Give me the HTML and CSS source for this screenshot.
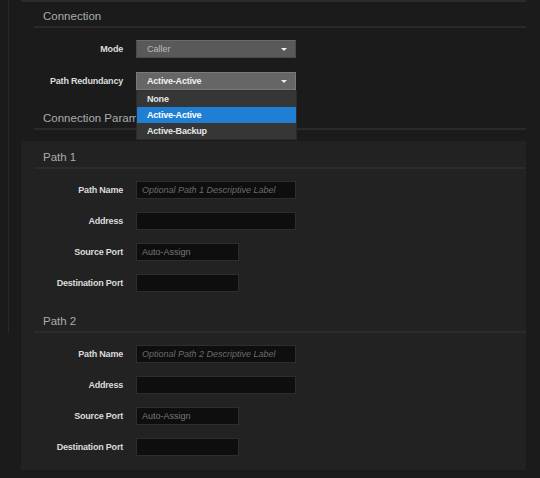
FILE: index.html
```html
<!DOCTYPE html>
<html lang="en">
<head>
  <meta charset="UTF-8" />
  <meta name="viewport" content="width=device-width, initial-scale=1.0" />
  <title>Connection Settings</title>
  <link rel="stylesheet" href="styles.css">
</head>
<body>
  <div class="layout">
    <div class="rail"></div>

    <div class="main">
      <!-- Connection -->
      <div class="section">
        <h2 class="section-title first">Connection</h2>
        <div class="fields">
          <div class="field">
            <label>Mode</label>
            <div class="select">
              <span>Caller</span>
              <i class="caret"></i>
            </div>
          </div>
          <div class="field">
            <label>Path Redundancy</label>
            <div class="select-wrap">
              <div class="select open">
                <span>Active-Active</span>
                <i class="caret"></i>
              </div>
              <ul class="menu">
                <li>None</li>
                <li class="selected">Active-Active</li>
                <li>Active-Backup</li>
              </ul>
            </div>
          </div>
        </div>
      </div>

      <div class="section params">
        <h2 class="section-title">Connection Parameters</h2>
      </div>

      <!-- Paths -->
      <div class="panel">
        <div class="section">
          <h2 class="section-title">Path 1</h2>
          <div class="fields tight">
            <div class="field">
              <label>Path Name</label>
              <input type="text" class="input wide desc" placeholder="Optional Path 1 Descriptive Label" />
            </div>
            <div class="field">
              <label>Address</label>
              <input type="text" class="input wide" />
            </div>
            <div class="field">
              <label>Source Port</label>
              <input type="text" class="input short" placeholder="Auto-Assign" />
            </div>
            <div class="field">
              <label>Destination Port</label>
              <input type="text" class="input short" />
            </div>
          </div>
        </div>

        <div class="section">
          <h2 class="section-title">Path 2</h2>
          <div class="fields tight last">
            <div class="field">
              <label>Path Name</label>
              <input type="text" class="input wide desc" placeholder="Optional Path 2 Descriptive Label" />
            </div>
            <div class="field">
              <label>Address</label>
              <input type="text" class="input wide" />
            </div>
            <div class="field">
              <label>Source Port</label>
              <input type="text" class="input short" placeholder="Auto-Assign" />
            </div>
            <div class="field">
              <label>Destination Port</label>
              <input type="text" class="input short" />
            </div>
          </div>
        </div>
      </div>
    </div>
  </div>
</body>
</html>
```

FILE: styles.css
```css
body {
  margin: 0;
  padding: 0;
  background: #1b1b1b;
  font-family: "Liberation Sans", Arial, sans-serif;
  font-size: 9px;
  color: #e0e0e0;
}

.layout {
  display: flex;
  align-items: flex-start;
}

.rail {
  width: 8px;
  height: 333px;
  border-right: 1px solid #282828;
  flex-shrink: 0;
}

.main {
  width: 505px;
  margin-left: 12px;
  border-top: 2px solid #2b2b2b;
}

.section {
  padding-left: 13px;
}

.section-title {
  margin: 0;
  padding: 6px 0 0 9px;
  line-height: 20px;
  font-size: 11.5px;
  font-weight: normal;
  color: #a9acaf;
  border-bottom: 2px solid #2a2a2a;
}

.section-title.first {
  padding-top: 4px;
}

.fields {
  display: flex;
  flex-direction: column;
  gap: 14px;
  padding: 12px 0;
}

.fields.tight {
  gap: 13px;
  padding: 12px 0 13px;
}

.fields.last {
  padding-bottom: 14px;
}

.params {
  margin-bottom: 11px;
}

.field {
  display: flex;
  align-items: center;
  height: 18px;
}

.field label {
  width: 89px;
  margin-right: 13px;
  text-align: right;
  font-weight: bold;
  letter-spacing: -0.2px;
  color: #dcdcdc;
}

.select-wrap {
  position: relative;
}

.select {
  box-sizing: border-box;
  width: 160px;
  height: 18px;
  padding: 0 8px 0 10px;
  display: flex;
  align-items: center;
  justify-content: space-between;
  background: #595959;
  border: 1px solid #4a4a4a;
  border-top-color: #6a6a6a;
  color: #b9b9b9;
}

.select.open {
  background: #666;
  border-color: #7a7a7a;
  color: #f2f2f2;
  font-weight: bold;
  letter-spacing: -0.2px;
}

.caret {
  width: 0;
  height: 0;
  border-left: 3px solid transparent;
  border-right: 3px solid transparent;
  border-top: 3px solid #eee;
}

.menu {
  position: absolute;
  top: 18px;
  left: 0;
  z-index: 2;
  width: 161px;
  margin: 0;
  padding: 0;
  list-style: none;
  background: #363636;
  border: 1px solid #2b2b2b;
  border-top: 1px solid #303030;
  box-sizing: border-box;
}

.menu li {
  height: 16px;
  line-height: 16px;
  padding-left: 10px;
  font-weight: bold;
  letter-spacing: -0.2px;
  color: #e6e6e6;
}

.menu .selected {
  background: #1f7fd3;
  color: #fff;
}

.panel {
  background: #222;
}

.panel .section-title {
  border-bottom-color: #2c2c2c;
}

.input {
  box-sizing: border-box;
  height: 18px;
  margin: 0;
  padding: 0 5px;
  background: #0e0e0e;
  border: 1px solid #2d2d2d;
  font-family: "Liberation Sans", Arial, sans-serif;
  font-size: 9px;
  color: #ddd;
  outline: none;
}

.input.wide {
  width: 160px;
}

.input.short {
  width: 103px;
}

.input::placeholder {
  color: #787878;
}

.input.desc::placeholder {
  font-style: italic;
  color: #6c6c6c;
}
```
